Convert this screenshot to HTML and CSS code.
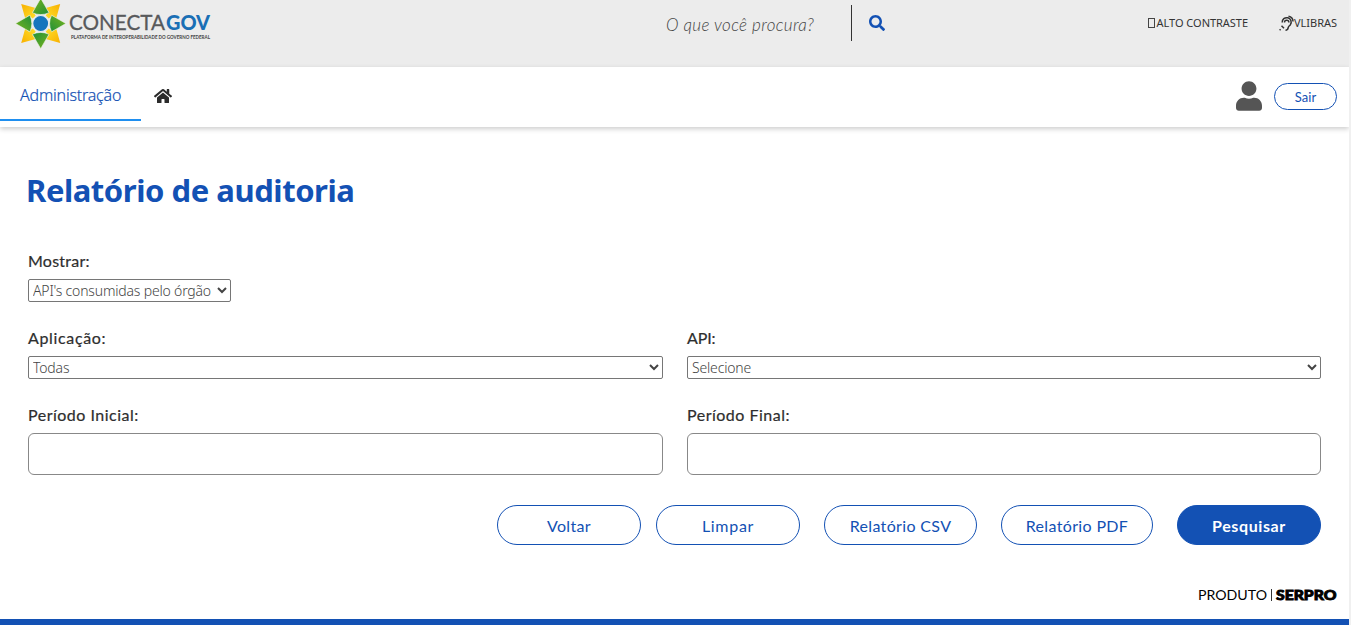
FILE: index.html
```html
<!DOCTYPE html>
<html lang="pt-BR">
<head>
<meta charset="utf-8">
<title>Relatório de auditoria</title>
<link rel="stylesheet" href="styles.css">
</head>
<body>
<div class="page">
  <header class="top">
    <svg class="logo" width="204" height="54" viewBox="12 0 204 54" role="img" aria-label="ConectaGov">
      <defs>
        <linearGradient id="leaf" x1="0" y1="0" x2="1" y2="1"><stop offset="0" stop-color="#7cb51c"/><stop offset="1" stop-color="#1f8f38"/></linearGradient>
        <linearGradient id="sun" x1="0" y1="0" x2="1" y2="1"><stop offset="0" stop-color="#f8b000"/><stop offset="1" stop-color="#ffdf2a"/></linearGradient>
      </defs>
      <g transform="translate(40.7 23.5)">
        <g fill="url(#sun)">
          <path id="petal" d="M-19.500-19.500-5-15.500-8-12-5-8-8-5-12-8-15.500-5Z"/>
          <use href="#petal" transform="rotate(90)"/><use href="#petal" transform="rotate(180)"/><use href="#petal" transform="rotate(270)"/>
        </g>
        <g fill="url(#leaf)" stroke="#f4f4ec" stroke-width=".6">
          <path id="arrow" d="M0-25.200-8.300-10.800Q0-7 8.300-10.800Z"/>
          <use href="#arrow" transform="rotate(90)"/><use href="#arrow" transform="rotate(180)"/><use href="#arrow" transform="rotate(270)"/>
        </g>
        <circle r="8" fill="#1475bd" stroke="#ececec" stroke-width="1.200"/>
      </g>
      <text class="logo-thin" x="69" y="30.3" textLength="96" lengthAdjust="spacingAndGlyphs">CONECTA</text>
      <text class="logo-bold" x="166" y="30.3" textLength="44" lengthAdjust="spacingAndGlyphs">GOV</text>
      <text class="logo-sub" x="71" y="38.5" textLength="139" lengthAdjust="spacingAndGlyphs">PLATAFORMA DE INTEROPERABILIDADE DO GOVERNO FEDERAL</text>
    </svg>
    <div class="search">
      <span class="search-hint">O que você procura?</span>
      <svg class="search-icon" width="16" height="16" viewBox="0 0 512 512"><path d="M505 442.7L405.3 343c-4.5-4.5-10.6-7-17-7H372c27.6-35.3 44-79.7 44-128C416 93.1 322.9 0 208 0S0 93.1 0 208s93.1 208 208 208c48.3 0 92.7-16.4 128-44v16.3c0 6.4 2.5 12.5 7 17l99.7 99.7c9.4 9.4 24.6 9.4 33.9 0l28.3-28.3c9.4-9.4 9.4-24.6.1-34zM208 336c-70.7 0-128-57.2-128-128 0-70.7 57.2-128 128-128 70.7 0 128 57.2 128 128 0 70.7-57.2 128-128 128z"/></svg>
    </div>
    <div class="access">
      <span class="access-item"><i class="box"></i><span>ALTO CONTRASTE</span></span>
      <span class="access-item">
        <svg class="ear" width="15" height="16" viewBox="0 0 15 16"><path d="M3.200 7.500a4.500 4.500 0 1 1 8.200 2.200c-1 1.300-2 1.500-2.200 3-.2 1.800-1.200 2.500-2.700 2.500M5.500 7.500a2.200 2.200 0 0 1 4.400 0M9.500 1.200c2.500.5 4.500 2.700 4.500 5.300M.6 15.200l1-1M2.500 10.700l2.500 2.500"/></svg><span>VLIBRAS</span>
      </span>
    </div>
  </header>

  <nav class="nav">
    <a class="tab">Administração</a>
    <svg class="home" width="18" height="16" viewBox="0 0 576 512"><path d="M280.37 148.26L96 300.11V464a16 16 0 0 0 16 16l112.06-.29a16 16 0 0 0 15.92-16V368a16 16 0 0 1 16-16h64a16 16 0 0 1 16 16v95.64a16 16 0 0 0 16 16.05L464 480a16 16 0 0 0 16-16V300L295.67 148.26a12.19 12.19 0 0 0-15.3 0zM571.6 251.47L488 182.56V44.05a12 12 0 0 0-12-12h-56a12 12 0 0 0-12 12v72.61L318.47 43a48 48 0 0 0-61 0L4.34 251.47a12 12 0 0 0-1.6 16.9l25.5 31A12 12 0 0 0 45.15 301l235.22-193.74a12.19 12.19 0 0 1 15.3 0L530.9 301a12 12 0 0 0 16.9-1.6l25.5-31a12 12 0 0 0-1.7-16.93z"/></svg>
    <div class="account">
      <svg class="user" width="26" height="30" viewBox="0 0 448 512"><path d="M224 256c70.700 0 128-57.300 128-128S294.700 0 224 0 96 57.300 96 128s57.300 128 128 128zm89.600 32h-16.700c-22.200 10.200-46.900 16-72.900 16s-50.600-5.800-72.900-16h-16.700C60.200 288 0 348.200 0 422.400V464c0 26.500 21.500 48 48 48h352c26.500 0 48-21.500 48-48v-41.600c0-74.200-60.200-134.400-134.400-134.400z"/></svg>
      <button class="exit">Sair</button>
    </div>
  </nav>

  <main class="main">
    <h1 class="title">Relatório de auditoria</h1>
    <form class="form">
      <div class="field wide">
        <label class="label">Mostrar:</label>
        <select class="select short"><option>API's consumidas pelo órgão</option></select>
      </div>
      <div class="field">
        <label class="label spaced">Aplicação:</label>
        <select class="select"><option>Todas</option></select>
      </div>
      <div class="field">
        <label class="label api">API:</label>
        <select class="select"><option>Selecione</option></select>
      </div>
      <div class="field">
        <label class="label period">Período Inicial:</label>
        <input class="input" type="text">
      </div>
      <div class="field">
        <label class="label period">Período Final:</label>
        <input class="input" type="text">
      </div>
    </form>
    <div class="actions">
      <button class="btn">Voltar</button>
      <button class="btn limpar">Limpar</button>
      <button class="btn csv">Relatório CSV</button>
      <button class="btn pdf">Relatório PDF</button>
      <button class="btn primary">Pesquisar</button>
    </div>
  </main>

  <footer class="footer">
    <svg width="146" height="20" viewBox="0 0 146 20" role="img" aria-label="Produto Serpro">
      <text class="produto" x="2" y="14" textLength="69" lengthAdjust="spacingAndGlyphs">PRODUTO</text>
      <path d="M75.500 3v12" stroke="#000" stroke-width=".8"/>
      <text class="serpro" x="80" y="14" textLength="60.500" lengthAdjust="spacingAndGlyphs">SERPRO</text>
    </svg>
  </footer>
</div>
</body>
</html>
```
FILE: styles.css
```css
* { box-sizing: border-box; }
body { margin: 0; background: #f0f0f0; font-family: "Open Sans", "Noto Sans", sans-serif; color: #333; overflow: hidden; }
.page { width: 1349px; height: 625px; background: #fff; display: flex; flex-direction: column; overflow: hidden; }

.top { height: 67px; flex: none; background: #ececec; display: flex; align-items: flex-start; }
.logo { margin-left: 12px; flex: none; }
.logo-thin { font: 400 21.500px Lato, sans-serif; fill: #58595b; stroke: #58595b; stroke-width: .3px; }
.logo-bold { font: 900 21.500px Lato, sans-serif; fill: #1a6fb5; }
.logo-sub { font: 700 5.500px Lato, sans-serif; fill: #444; }
.search { display: flex; margin-left: 450px; height: 36px; margin-top: 5px; }
.search-hint { width: 186px; border-right: 1px solid #333; font: italic 300 17px/40px Lato, sans-serif; color: #444; white-space: nowrap; letter-spacing: .35px; }
.search-icon { fill: #1351b4; margin: 10px 0 0 17px; }
.access { margin-left: auto; margin-right: 12px; display: flex; gap: 31px; padding-top: 15px; font: 400 11px/16px "Noto Sans", sans-serif; }
.access-item { display: flex; white-space: nowrap; letter-spacing: -.03px; }
.box { width: 7px; height: 10px; border: 1px solid #444; margin: 3px 2px 0 0; }
.ear { fill: none; stroke: #333; stroke-width: 1.500; }

.nav { height: 60px; flex: none; display: flex; background: #fff; box-shadow: 0 2px 5px rgba(0,0,0,.2); position: relative; }
.tab { width: 141px; height: 54px; border-bottom: 2px solid #1f8ff0; padding-left: 20px; font: 300 16px/57px "Noto Sans", sans-serif; color: #1351b4; letter-spacing: -.2px; -webkit-text-stroke: .2px #1351b4; }
.home { margin: 21px 0 0 12.500px; fill: #2b2b2b; }
.account { margin-left: auto; margin-right: 12px; display: flex; }
.user { fill: #555; margin: 14px 12px 0 0; }
.exit { width: 63px; height: 27px; margin-top: 16px; padding: 1px 0 0; border: 1px solid #1351b4; border-radius: 14px; background: #fff; color: #1351b4; font: 400 13px Lato, sans-serif; }

.main { padding: 43px 28px 0; }
.title { margin: 0 0 0 -2px; font: 700 31px/41px "Noto Sans", sans-serif; color: #1351b4; white-space: nowrap; letter-spacing: -.45px; }
.form { display: grid; grid-template-columns: 635px 634px; column-gap: 24px; margin-top: 38px; }
.field { height: 77px; display: flex; flex-direction: column; }
.wide { grid-column: 1 / 3; }
.label { height: 30px; font: 400 16px/23px Lato, sans-serif; color: #2e2e2e; -webkit-text-stroke: .2px #2e2e2e; letter-spacing: .25px; }
.spaced { letter-spacing: .65px; }
.period { letter-spacing: .5px; }
.api { letter-spacing: -.1px; }
.select { height: 23px; width: 100%; font: 300 14px "Noto Sans", sans-serif; color: #444; background: #fff; border: 1px solid #767676; border-radius: 2px; padding: 0; letter-spacing: -.18px; }
.short { width: 203px; }
.input { height: 42px; width: 100%; border: 1px solid #888; border-radius: 6px; background: #fff; }
.actions { display: flex; justify-content: flex-end; margin-top: 25px; }
.btn { width: 144px; height: 40px; padding: 1px 0 0; border: 1px solid #1351b4; border-radius: 20px; background: #fff; color: #1351b4; font: 400 16px/19px Lato, sans-serif; white-space: nowrap; letter-spacing: .35px; }
.limpar { margin-left: 15px; letter-spacing: .7px; }
.csv { width: 153px; margin-left: 24px; }
.pdf { width: 152px; margin-left: 24px; }
.primary { margin-left: 24px; background: #1351b4; color: #fff; font-weight: 700; letter-spacing: .6px; }

.footer { margin-top: auto; height: 39px; border-bottom: 6px solid #1351b4; display: flex; justify-content: flex-end; padding-right: 7px; }
.produto { font: 400 14px Lato, sans-serif; }
.serpro { font: 900 14px Lato, sans-serif; stroke: #000; stroke-width: .9px; }
```
